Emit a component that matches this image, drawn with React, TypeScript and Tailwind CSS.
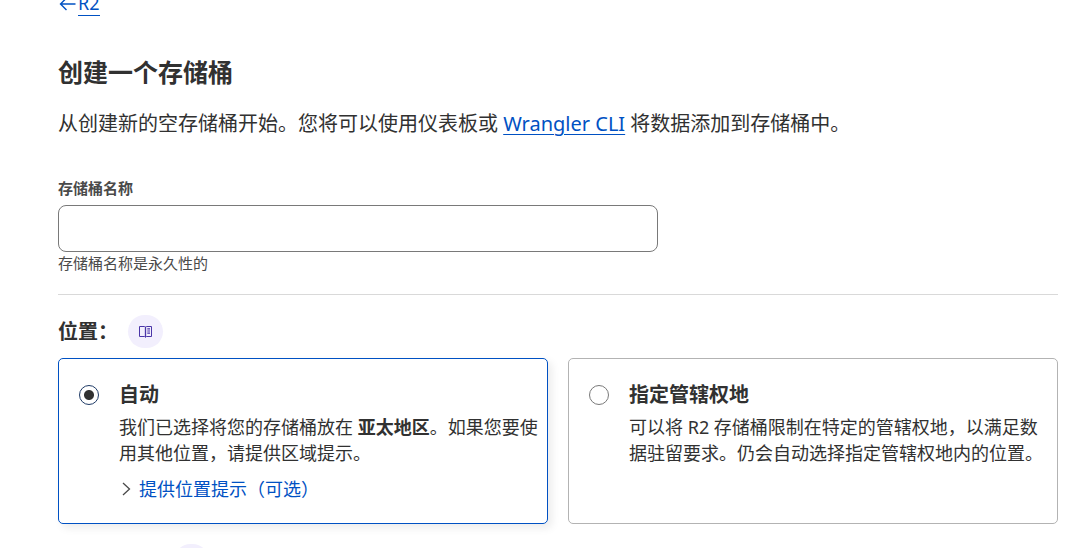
import { useState, type ReactNode } from "react";

function DocsBadge({ label }: { label: string }) {
  return (
    <a
      href="#docs"
      aria-label={label}
      className="flex h-[33px] w-[35px] shrink-0 items-center justify-center rounded-full bg-[#f2effd] text-[#4a35a8]"
    >
      <svg width="13" height="13" viewBox="0 0 13 13" fill="none" stroke="currentColor" aria-hidden="true">
        <path d="M.5 1.5h5l1 .6 1-.6h5v10h-5l-1 .7-1-.7h-5z" strokeWidth="1" />
        <path d="M6.5 1.8v10.4" strokeWidth="1.3" />
        <path d="M8.3 3.9h2.7M8.3 6h2.7M8.3 8.1h2.7" strokeWidth="1.1" />
      </svg>
    </a>
  );
}

type OptionProps = {
  id: string;
  title: string;
  selected: boolean;
  onSelect: () => void;
  description: ReactNode;
  children?: ReactNode;
};

function LocationOption({ id, title, selected, onSelect, description, children }: OptionProps) {
  return (
    <div
      className={
        selected
          ? "flex min-h-[166px] gap-5 rounded-[5px] border border-[#0051c3] pt-[21px] pr-2 pb-4 pl-5 shadow-[4px_4px_8px_rgba(0,0,0,0.08)]"
          : "flex min-h-[166px] gap-5 rounded-[5px] border border-[#b3b3b3] pt-[21px] pr-2 pb-4 pl-5"
      }
    >
      <input
        type="radio"
        id={id}
        name="location"
        checked={selected}
        onChange={onSelect}
        className="mt-[5px] size-5 shrink-0 appearance-none rounded-full border border-[#797979] bg-white checked:border-[#1f3b66] checked:bg-[radial-gradient(circle,#313131_4.5px,transparent_5.5px)]"
      />
      <div className="min-w-0 flex-1">
        <label htmlFor={id} className="block text-[20px] leading-[30px] font-bold">
          {title}
        </label>
        <p className="mt-1 text-[18px] leading-[26px]">{description}</p>
        {children}
      </div>
    </div>
  );
}

export default function App() {
  const [name, setName] = useState("");
  const [location, setLocation] = useState("auto");

  return (
    <main className="h-screen overflow-hidden bg-white pr-[30px] pl-[58px] font-['Noto_Sans','Noto_Sans_CJK_SC',sans-serif] text-[#313131]">
      <nav className="-mt-[9px] flex h-[26px] items-center text-[18px] leading-[23px] text-[#0051c3]">
        <a href="#r2" className="flex items-center">
          <svg width="20" height="16" viewBox="0 0 20 16" fill="none" stroke="currentColor" strokeWidth="1.4" aria-hidden="true">
            <path d="M17.5 8H2.5M8.5 2L2.5 8l6 6" />
          </svg>
          <span className="border-b border-[#0051c3]">R2</span>
        </a>
      </nav>

      <h1 className="mt-9 text-[25px] leading-[38px] font-bold">创建一个存储桶</h1>
      <p className="mt-[18px] text-[20px] leading-[30px]">
        从创建新的空存储桶开始。您将可以使用仪表板或{" "}
        <a href="#wrangler" className="text-[#0051c3] underline decoration-1 underline-offset-3">
          Wrangler CLI
        </a>{" "}
        将数据添加到存储桶中。
      </p>

      <div className="mt-[38px] max-w-[600px] text-[15px] leading-[22px] text-[#4a4a4a]">
        <label htmlFor="bucket-name" className="block font-semibold">
          存储桶名称
        </label>
        <input
          id="bucket-name"
          type="text"
          value={name}
          onChange={(e) => setName(e.target.value)}
          aria-describedby="bucket-hint"
          className="mt-[6px] block h-[47px] w-full rounded-lg border border-[#797979] bg-white px-4 text-[18px] outline-none"
        />
        <p id="bucket-hint">存储桶名称是永久性的</p>
      </div>

      <hr className="mt-5 border-[#d9d9d9]" />

      <div className="mt-5 flex items-center gap-[10px]">
        <h2 className="text-[20px] leading-[30px] font-bold">位置：</h2>
        <DocsBadge label="位置" />
      </div>

      <div className="mt-[10px] grid grid-cols-2 gap-5">
        <LocationOption
          id="auto"
          title="自动"
          selected={location === "auto"}
          onSelect={() => setLocation("auto")}
          description={
            <>
              我们已选择将您的存储桶放在 <strong className="font-bold">亚太地区</strong>。如果您要使用其他位置，请提供区域提示。
            </>
          }
        >
          <button type="button" className="mt-[10px] flex items-center text-[18px] leading-[26px] text-[#0051c3]">
            <svg width="20" height="16" viewBox="0 0 20 16" fill="none" stroke="#4a4a4a" strokeWidth="1.3" aria-hidden="true">
              <path d="M4 2l6.5 6L4 14" />
            </svg>
            提供位置提示（可选）
          </button>
        </LocationOption>
        <LocationOption
          id="jurisdiction"
          title="指定管辖权地"
          selected={location === "jurisdiction"}
          onSelect={() => setLocation("jurisdiction")}
          description="可以将 R2 存储桶限制在特定的管辖权地，以满足数据驻留要求。仍会自动选择指定管辖权地内的位置。"
        />
      </div>

      <div className="mt-5 ml-[116px] flex">
        <DocsBadge label="R2" />
      </div>
    </main>
  );
}
